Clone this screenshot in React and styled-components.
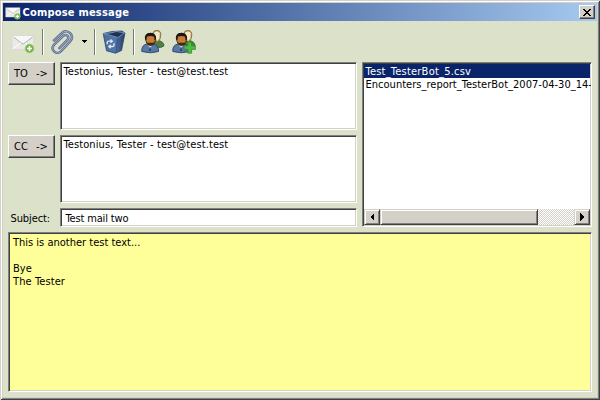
import React from "react";
import styled, { createGlobalStyle, css } from "styled-components";

const Global = createGlobalStyle`
  * { box-sizing: border-box; }
  html, body { margin: 0; width: 600px; height: 400px; overflow: hidden; }
  body { font: 11px/13px "DejaVu Sans Condensed", "DejaVu Sans", sans-serif; font-stretch: condensed; color: #000; }
`;
const raised = css`
  border: 1px solid; border-color: #fff #404040 #404040 #fff;
  box-shadow: inset -1px -1px #808080;
  background: #d4d0c8;
`;
const Window = styled.main`
  width: 600px; height: 400px; padding: 3px;
  display: flex; flex-direction: column; background: #dce1ca;
  box-shadow: inset 1px 1px #d4d0c8, inset -1px -1px #404040, inset 2px 2px #fff, inset -2px -2px #808080, inset 0 0 0 3px #d4d0c8;
`;
const TitleBar = styled.header`
  height: 18px; flex: none; display: flex; align-items: center; padding: 0 2px 0 2px;
  background: linear-gradient(90deg, #0a246a, #a6caf0); color: #fff;
`;
const Title = styled.h1`
  margin: 0 auto 0 1.5px; font: bold 11px/16px "DejaVu Sans Condensed", "DejaVu Sans", sans-serif;
  font-stretch: condensed; letter-spacing: 0.2px; white-space: nowrap; padding-top: 1px;
`;
const Close = styled.button`
  ${raised} width: 16px; height: 14px; padding: 0; display: grid; place-items: center;
`;
const Toolbar = styled.nav`
  height: 41px; flex: none; display: flex; align-items: center; padding-left: 8px;
`;
const Tool = styled.span`
  width: ${(p) => p.$w}px; height: 26px; margin-right: ${(p) => p.$gap || 0}px; display: grid; place-items: center; flex: none;
  svg { display: block; }
`;
const Rule = styled.i`
  width: 2px; height: 26px; flex: none; border-left: 1px solid #77796f; border-right: 1px solid #fff; margin-right: ${(p) => p.$gap}px;
`;
const Upper = styled.section`
  display: grid; grid-template-columns: 349px 230px; column-gap: 5px; justify-content: end; padding-right: 5px; height: 165px; flex: none;
`;
const Fields = styled.div`
  display: grid; grid-template-columns: 47px 297px; grid-template-rows: 68px 68px 19px; column-gap: 5px; row-gap: 5px;
`;
const Sunken = styled.div`
  border: 1px solid; border-color: #808080 #fff #fff #808080; background: ${(p) => p.$bg || "#fff"};
  padding: 1px; box-shadow: inset 1px 1px #404040, inset -1px -1px #d4d0c8; overflow: hidden; min-width: 0;
`;
const Recipients = styled(Sunken)`padding: 2px 1px 1px 2.5px;`;
const Subject = styled(Sunken)`padding: 3px 1px 1px 4.5px;`;
const Button = styled.button`
  ${raised} width: 47px; height: 23px; padding: 0 0 1px 5px; font: inherit; text-align: left; display: flex; align-items: center;
`;
const ButtonLabel = styled.span`width: ${(p) => p.$w}px;`;
const Text = styled.span`white-space: pre; letter-spacing: ${(p) => p.$track || 0}px;`;
const Label = styled.label`padding: 4px 0 0 2.5px;`;
const Files = styled(Sunken)`display: flex; flex-direction: column; padding: 1px;`;
const File = styled.div`
  height: 14px; margin-bottom: -1px; line-height: 15px; padding-left: 1.5px; white-space: nowrap;
  background: ${(p) => (p.$on ? "#0a246a" : "transparent")}; color: ${(p) => (p.$on ? "#fff" : "#000")};
`;
const FileList = styled.div`flex: 1; min-height: 0;`;
const Scroll = styled.div`
  height: 16px; display: flex; background: repeating-conic-gradient(#fff 0 25%, #d4d0c8 0 50%) 0 0 / 2px 2px;
`;
const ScrollPart = styled.div`
  width: ${(p) => p.$w}px; height: 16px; border: 1px solid; border-color: #d4d0c8 #404040 #404040 #d4d0c8;
  box-shadow: inset 1px 1px #fff, inset -1px -1px #808080; background: #d4d0c8;
  margin-left: ${(p) => (p.$end ? "auto" : 0)}; display: grid; place-items: center;
`;
const Message = styled(Sunken)`
  height: 160px; margin: 5px 5px 0; padding: 3px 3px 3px 4px;
`;
const Line = styled.div`height: 13px;`;

const Mail = ({ size = 24 }) => (
  <svg width={size} height={size} viewBox="0 0 24 24">
    <path d="M1 5.5h21.5v14H1z" fill="#e9e9e8" stroke="#d3d4d0" strokeWidth=".6" />
    <path d="M1.4 6h20.8L12 14z" fill="#f8f8f8" />
    <path d="M2.5 7 11 13.6q1 .8 2 0L21.5 7" fill="none" stroke="#b2b2b0" />
    <path d="M1.5 19l8-6m12 6-7.5-6" stroke="#fff" fill="none" />
    <circle cx="18.5" cy="18.5" r="4.3" fill="#6fb63e" stroke="#a5cb82" />
    <path d="M18.5 16v5m-2.5-2.5h5" stroke="#fff" strokeWidth="1.7" />
  </svg>
);
const clipPath = "M4 10.5 11.5 3.3c3-3 6.8-2.2 9 .2 2.3 2.8 1.7 5.6-.4 8L11.3 21c-2.4 2.5-5.3 2.2-7.2.4-2-2-1.8-4.8.3-7l8.8-8.6c1.5-1.4 3.4-1 4.4.1 1.2 1.4.8 2.9-.4 4.2l-7.8 8";
const Clip = () => (
  <svg width="24" height="24" viewBox="0 0 24 24">
    <path d={clipPath} fill="none" stroke="#596a8d" strokeWidth="2.5" strokeLinecap="round" />
    <path d={clipPath} fill="none" stroke="#a4b1cc" strokeWidth="1" strokeLinecap="round" />
  </svg>
);
const Bin = () => (
  <svg width="24" height="24" viewBox="0 0 24 24">
    <defs>
      <linearGradient id="bin"><stop stopColor="#4c6b99" /><stop offset=".55" stopColor="#5276a9" /><stop offset="1" stopColor="#233a60" /></linearGradient>
    </defs>
    <path d="M1.2 3.5 10 1.5l10-.5 3 2-3.5 17.5-6 2.7-9-2.4z" fill="url(#bin)" stroke="#2b456f" strokeWidth=".8" />
    <path d="M1.5 3.5 9 3l5-1.5 8.5 1.3L16 7.5z" fill="#1e3152" stroke="#809dc4" strokeWidth=".8" />
    <path d="M16 7.5 14 22.8" stroke="#324e7b" strokeWidth=".8" />
    <path d="M5.2 14.3v-1.7q0-1.5 1.7-1.5h3m-1.4-1.7 1.8 1.8-1.8 1.6M12 13.2v2q0 1.3-1.5 1.3H7.3m1.4-1.7-1.8 1.8 1.8 1.7" fill="none" stroke="#dce6f3" strokeWidth="1.4" />
  </svg>
);
const People = ({ add }) => (
  <svg width="24" height="24" viewBox="0 0 24 24">
    <path d="M11 13q2-3 6-2.5c4 .5 6.3 3 5.8 5.5q-3 2.5-7.5 1z" fill="#4c8247" stroke="#2d5531" strokeWidth=".8" />
    <path d="M11.5 4q1-3.7 4.3-3.7 4 .2 4 4.5 0 5-3.4 7.5Q11.5 10 11.5 4z" fill="#c7a052" stroke="#6e5a32" strokeWidth=".7" />
    <path d="M12.8 3q3-3.2 6 0l-.5 5.5-2.3 2.5z" fill="#f2ead0" />
    <path d="M.8 21.5q-.5-6.5 5.2-7.5h6q6 1 5.5 7.5-8 2.5-16.7 0z" fill="#5779a5" stroke="#294266" strokeWidth=".9" />
    <path d="M6.5 14 9 18.5l3-4.5" fill="#e5edf6" /><path d="m9 15.5-1 5.5h2z" fill="#243d66" />
    <path d="M4.5 9q-.4-5.6 4.9-5.6t5.1 5.6q-.5 6.3-4.9 6.5Q5.2 15 4.5 9z" fill="#c97d34" stroke="#38200f" strokeWidth=".8" />
    <path d="M4 9.5q-.8-6.8 5.4-6.8t5.6 6.8l-1.5.6-.3-3.4q-3.7-1.2-7.4 0l-.3 3.4z" fill="#1c1816" />
    <path d="M5 11.5l1.5 1.3h5.8l1.5-1.3q-.8 3.8-4.4 4-3.5-.2-4.4-4z" fill="#452715" />
    {add && <path d="M15.8 12h3.8v3.8h3.8v3.6h-3.8v3.8h-3.8v-3.8H12v-3.6h3.8z" fill="#50bb42" stroke="#278525" strokeWidth=".7" />}
  </svg>
);
const Arrow = ({ right }) => (
  <svg width="10" height="10" shapeRendering="crispEdges">
    <path d={right ? "M3 1v8l4-4z" : "M7 1v8L3 5z"} />
  </svg>
);

export default function App() {
  return (
    <>
      <Global />
      <Window>
        <TitleBar>
          <Mail size={16} />
          <Title>Compose message</Title>
          <Close aria-label="Close">
            <svg width="8" height="7" shapeRendering="crispEdges"><path d="M0 0h2v1h1v1h2V1h1V0h2v1H7v1H6v1H5v1h1v1h1v1h1v1H6V6H5V5H3v1H2v1H0V6h1V5h1V4h1V3H2V2H1V1H0z" /></svg>
          </Close>
        </TitleBar>
        <Toolbar>
          <Tool $w={24} $gap={7}><Mail /></Tool>
          <Rule $gap={6} />
          <Tool $w={24} $gap={8}><Clip /></Tool>
          <Tool $w={5} $gap={7}><svg width="5" height="3" shapeRendering="crispEdges"><path d="M0 0h5v1H4v1H3v1H2V2H1V1H0z" /></svg></Tool>
          <Rule $gap={6} />
          <Tool $w={24} $gap={7}><Bin /></Tool>
          <Rule $gap={6} />
          <Tool $w={24} $gap={7}><People /></Tool>
          <Tool $w={24}><People add /></Tool>
        </Toolbar>
        <Upper>
          <Fields>
            <Button><ButtonLabel $w={22}>TO</ButtonLabel>-&gt;</Button>
            <Recipients><Text $track={0.1}>Testonius, Tester - test@test.test</Text></Recipients>
            <Button><ButtonLabel $w={22}>CC</ButtonLabel>-&gt;</Button>
            <Recipients><Text $track={0.1}>Testonius, Tester - test@test.test</Text></Recipients>
            <Label><Text $track={-0.1}>Subject:</Text></Label>
            <Subject><Text $track={-0.15}>Test mail two</Text></Subject>
          </Fields>
          <Files>
            <FileList>
              <File $on><Text $track={0.22}>Test_TesterBot_5.csv</Text></File>
              <File><Text $track={0.02}>Encounters_report_TesterBot_2007-04-30_14-</Text></File>
            </FileList>
            <Scroll>
              <ScrollPart $w={16}><Arrow /></ScrollPart>
              <ScrollPart $w={158} />
              <ScrollPart $w={16} $end><Arrow right /></ScrollPart>
            </Scroll>
          </Files>
        </Upper>
        <Message $bg="#ffff99">
          <Line><Text>This is another test text...</Text></Line>
          <Line />
          <Line><Text>Bye</Text></Line>
          <Line><Text $track={0.1}>The Tester</Text></Line>
        </Message>
      </Window>
    </>
  );
}
